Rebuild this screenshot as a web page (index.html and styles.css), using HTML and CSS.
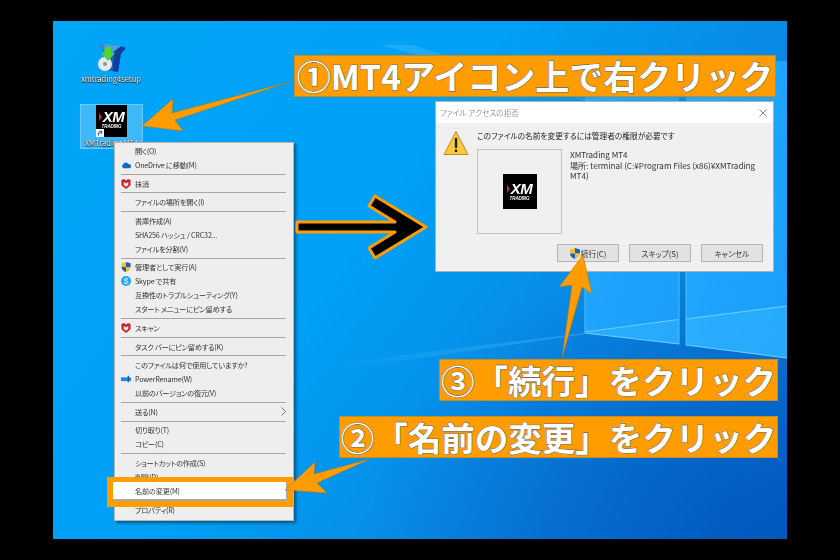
FILE: index.html
```html
<!DOCTYPE html>
<html lang="ja">
<head>
<meta charset="utf-8">
<title>ファイル名の変更</title>
<link rel="stylesheet" href="styles.css">
</head>
<body>
<main class="desktop">
  <svg class="wallpaper" viewBox="0 0 734 518" aria-hidden="true">
    <defs>
      <linearGradient id="pane" x1="0" y1="0" x2="1" y2="1">
        <stop offset="0" stop-color="#22aaff"/>
        <stop offset="1" stop-color="#1a9ef8"/>
      </linearGradient>
      <linearGradient id="ray" x1="0" y1="0" x2="1" y2="0">
        <stop offset="0" stop-color="#7fd4ff" stop-opacity="0"/>
        <stop offset="1" stop-color="#7fd4ff" stop-opacity=".3"/>
      </linearGradient>
    </defs>
    <polygon points="532,40 626,40 626,323 532,312" fill="url(#pane)"/>
    <polygon points="633,40 734,40 734,337 633,324" fill="url(#pane)"/>
    <polygon points="532,312 626,299 626,323" fill="#38b8ff" opacity=".45"/>
    <polygon points="633,298 734,285 734,337 633,324" fill="#38b8ff" opacity=".45"/>
    <path d="M532 311 L626 298.500 M633 298 L734 285 M532 312 L626 323 M633 324 L734 337" stroke="#6fd0ff" stroke-width="1" fill="none"/>
    <path d="M532 265 V312 M626 240 V323 M633 240 V324" stroke="#4cc4ff" stroke-width="1" fill="none"/>
    <polygon points="277,343 532,312 532,313 277,350" fill="url(#ray)"/>
    <polygon points="327,24 540,80 540,82 360,24" fill="#5cc6ff" opacity=".3"/>
  </svg>

  <figure class="shortcut setup">
    <svg class="setup-icon" viewBox="0 0 28 30" aria-hidden="true">
      <polygon points="8,10 23,10 20,29 7,27" fill="#1c62c0"/>
      <polygon points="16,10 23,10 20,29 15,28" fill="#0f3f96"/>
      <polygon points="0,2 5,1 12,10 8,12" fill="#2f86d6"/>
      <polygon points="28,5 23,3 15,9 18,10 23,11" fill="#123f8f"/>
      <polygon points="5,1 23,3 15,9 11,9" fill="#4e9ee6"/>
      <circle cx="7" cy="21" r="7" fill="#e6eaec"/>
      <circle cx="7" cy="21" r="2" fill="#8d979d"/>
      <polygon points="6.500,4 13,4 13,10 17,10 10,18 3,10 6.500,10" fill="#54d42a"/>
    </svg>
    <figcaption class="shortcut-label setup-label">xmtrading4setup</figcaption>
  </figure>

  <figure class="shortcut selected">
    <div class="xm-logo xm-desktop">
      <span class="xm-mark"><i class="xm-chevron"></i>XM</span>
      <span class="xm-sub">TRADING</span>
      <svg class="xm-link" viewBox="0 0 10 10" aria-hidden="true">
        <rect width="10" height="10" fill="#fff"/>
        <path d="M3 8 V5 H6 M4 3 H7 V6" stroke="#1d6fc4" stroke-width="1.500" fill="none"/>
      </svg>
    </div>
    <figcaption class="shortcut-label">XMTrading MT4</figcaption>
  </figure>

  <nav class="menu">
    <div class="row">開く(O)</div>
    <div class="row">
      <svg class="row-icon" viewBox="0 0 12 8" aria-hidden="true"><path d="M3 8 A2.500 2.500 0 0 1 2.500 3.500 A3.500 3.500 0 0 1 9 3 A2.500 2.500 0 0 1 10 8 Z" fill="#0f6cc4"/></svg>
      OneDrive に移動(M)
    </div>
    <hr class="sep">
    <div class="row">
      <svg class="row-icon" viewBox="0 0 10 11" aria-hidden="true"><path d="M0 1 L3 0 L5 2 L7 0 L10 1 V7 L5 11 L0 7 Z M2.500 3 V6.500 L5 8.500 L7.500 6.500 V3 L5 5 Z" fill="#c8202c" fill-rule="evenodd"/></svg>
      抹消
    </div>
    <hr class="sep">
    <div class="row">ファイルの場所を開く(I)</div>
    <hr class="sep">
    <div class="row">書庫作成(A)</div>
    <div class="row">SHA256 ハッシュ / CRC32...</div>
    <div class="row">ファイルを分割(V)</div>
    <hr class="sep">
    <div class="row">
      <svg class="row-icon" viewBox="0 0 10 11" aria-hidden="true"><path d="M5 0 L10 1.500 V5.500 H5 Z" fill="#1f5fb5"/><path d="M5 0 L0 1.500 V5.500 H5 Z" fill="#f6c21c"/><path d="M0 5.500 H5 V11 C2 10 0 8 0 5.500 Z" fill="#1f5fb5"/><path d="M10 5.500 H5 V11 C8 10 10 8 10 5.500 Z" fill="#f6c21c"/></svg>
      管理者として実行(A)
    </div>
    <div class="row">
      <svg class="row-icon" viewBox="0 0 10 10" aria-hidden="true"><circle cx="5" cy="5" r="5" fill="#22a6ec"/><path d="M7 3.300 C6 2.300 3.300 2.500 3.300 3.800 C3.300 5.300 6.900 4.700 6.900 6.300 C6.900 7.700 4 7.800 3 6.700" stroke="#fff" stroke-width="1" fill="none"/></svg>
      Skype で共有
    </div>
    <div class="row">互換性のトラブルシューティング(Y)</div>
    <div class="row">スタート メニューにピン留めする</div>
    <hr class="sep">
    <div class="row">
      <svg class="row-icon" viewBox="0 0 10 11" aria-hidden="true"><path d="M0 1 L3 0 L5 2 L7 0 L10 1 V7 L5 11 L0 7 Z M2.500 3 V6.500 L5 8.500 L7.500 6.500 V3 L5 5 Z" fill="#c8202c" fill-rule="evenodd"/></svg>
      スキャン
    </div>
    <hr class="sep">
    <div class="row">タスク バーにピン留めする(K)</div>
    <hr class="sep">
    <div class="row">このファイルは何で使用していますか?</div>
    <div class="row">
      <svg class="row-icon" viewBox="0 0 12 8" aria-hidden="true"><rect x="0" y="2" width="12" height="4.500" fill="#2a86d8"/><rect x="8" y="0" width="1.500" height="8" fill="#0f5ca8"/></svg>
      PowerRename(W)
    </div>
    <div class="row">以前のバージョンの復元(V)</div>
    <hr class="sep">
    <div class="row row-sub">送る(N)
      <svg class="chevron" viewBox="0 0 5 9" aria-hidden="true"><path d="M.5 .5 L4.500 4.500 L.5 8.500" stroke="#777" fill="none"/></svg>
    </div>
    <hr class="sep">
    <div class="row">切り取り(T)</div>
    <div class="row">コピー(C)</div>
    <hr class="sep">
    <div class="row">ショートカットの作成(S)</div>
    <div class="row">削除(D)</div>
    <div class="row row-active">名前の変更(M)</div>
    <hr class="sep">
    <div class="row">プロパティ(R)</div>
  </nav>

  <section class="dialog">
    <header class="dialog-title">
      <span>ファイル アクセスの拒否</span>
      <svg class="dialog-close" viewBox="0 0 9 9" aria-hidden="true"><path d="M.5 .5 L8.500 8.500 M8.500 .5 L.5 8.500" stroke="#777"/></svg>
    </header>
    <div class="dialog-body">
      <svg class="warn" viewBox="0 0 26 26" aria-hidden="true">
        <path d="M13 1.500 L25 24.500 H1 Z" fill="#fbc93d" stroke="#c98a1a" stroke-linejoin="round"/>
        <rect x="11.800" y="8" width="2.400" height="10" fill="#222"/>
        <rect x="11.800" y="19.500" width="2.400" height="2.500" fill="#222"/>
      </svg>
      <div class="dialog-main">
        <p class="dialog-msg">このファイルの名前を変更するには管理者の権限が必要です</p>
        <div class="dialog-file">
          <div class="thumb">
            <div class="xm-logo xm-thumb">
              <span class="xm-mark"><i class="xm-chevron"></i>XM</span>
              <span class="xm-sub">TRADING</span>
            </div>
          </div>
          <div class="file-info">XMTrading MT4<br>場所: terminal (C:¥Program Files (x86)¥XMTrading MT4)</div>
        </div>
      </div>
    </div>
    <footer class="dialog-actions">
      <button class="btn" type="button">
        <svg class="btn-shield" viewBox="0 0 10 11" aria-hidden="true"><path d="M5 0 L10 1.500 V5.500 H5 Z" fill="#1f5fb5"/><path d="M5 0 L0 1.500 V5.500 H5 Z" fill="#f6c21c"/><path d="M0 5.500 H5 V11 C2 10 0 8 0 5.500 Z" fill="#1f5fb5"/><path d="M10 5.500 H5 V11 C8 10 10 8 10 5.500 Z" fill="#f6c21c"/></svg>
        続行(C)
      </button>
      <button class="btn" type="button">スキップ(S)</button>
      <button class="btn" type="button">キャンセル</button>
    </footer>
  </section>

  <svg class="arrows" viewBox="0 0 734 518" aria-hidden="true">
    <g fill="#ff9d00" stroke="#a8741a" stroke-width=".5" transform="translate(-53 -21)">
      <polygon points="142,126 173,99 172,113 289,82 175,120 183,131"/>
      <polygon points="285,490 315,462 314,474 370,459 317,483 327,493"/>
      <polygon points="583,255 559,287 572,285 562,358 582,287 592,294"/>
    </g>
    <polygon transform="translate(-53 -21)" points="297,222 395,222 369,206 375,196 426,227 375,258 369,248 395,232 297,232" fill="#000" stroke="#ff9d00" stroke-width="3" stroke-linejoin="round"/>
  </svg>

  <div class="callout c1">①MT4アイコン上で右クリック</div>
  <div class="callout c3">③「続行」をクリック</div>
  <div class="callout c2">②「名前の変更」をクリック</div>
</main>
</body>
</html>
```

FILE: styles.css
```css
* { box-sizing: border-box; }

html, body {
  margin: 0;
  width: 840px;
  height: 560px;
  background: #000;
  overflow: hidden;
}

body {
  padding: 21px 53px;
  font-family: "Noto Sans CJK JP", "Noto Sans", sans-serif;
  font-feature-settings: "palt";
}

.desktop {
  position: relative;
  width: 734px;
  height: 518px;
  overflow: hidden;
  background:
    radial-gradient(ellipse 420px 300px at 100% 100%, #0058bd 0%, rgba(0, 88, 189, 0) 100%),
    linear-gradient(125deg, #00a6f8 0%, #00a0f6 42%, #0a86e2 72%, #0a6fd2 100%);
}

.wallpaper, .arrows {
  position: absolute;
  inset: 0;
  width: 734px;
  height: 518px;
}

.arrows { z-index: 5; filter: blur(.2px); }

/* desktop shortcuts */
.shortcut {
  position: absolute;
  margin: 0;
  display: flex;
  flex-direction: column;
  align-items: center;
  filter: blur(.3px);
}

.setup { left: 26px; top: 22px; width: 64px; }
.setup-icon { width: 28px; height: 30px; margin-left: 2px; }
.setup-label { margin-top: 3px; }

.selected {
  left: 27px;
  top: 83px;
  width: 63px;
  height: 45px;
  padding-top: 1px;
  background: rgba(255, 255, 255, .24);
  box-shadow: inset 0 0 0 1px rgba(255, 255, 255, .25);
}

.shortcut-label {
  margin-top: 1px;
  font-size: 7.500px;
  line-height: 10px;
  color: #fff;
  white-space: nowrap;
  text-shadow: 0 0 1px #000, 0 1px 1px #000;
}

/* XM logo */
.xm-logo {
  position: relative;
  background: #000;
  color: #fff;
  display: flex;
  flex-direction: column;
  align-items: center;
  justify-content: center;
  gap: 1px;
  font-family: "Liberation Sans", sans-serif;
  font-weight: 700;
  font-style: italic;
}

.xm-desktop { width: 31px; height: 32px; padding-bottom: 3px; }
.xm-thumb { width: 34px; height: 35px; }

.xm-mark {
  display: flex;
  align-items: center;
  gap: 1px;
  font-size: 15px;
  line-height: 12px;
  letter-spacing: -.6px;
}

.xm-chevron {
  width: 0;
  height: 0;
  border-left: 3px solid #e0202c;
  border-top: 4px solid transparent;
  border-bottom: 4px solid transparent;
}

.xm-sub {
  font-size: 4.500px;
  line-height: 5px;
  letter-spacing: -.1px;
}

.xm-link {
  position: absolute;
  left: 0;
  bottom: 0;
  width: 8px;
  height: 8px;
}

/* context menu */
.menu {
  position: absolute;
  z-index: 2;
  left: 61px;
  top: 121px;
  width: 180px;
  height: 379px;
  padding: 1px 7px 2px 6px;
  background: #eee;
  border: 1px solid #b5b5b5;
  box-shadow: 2px 2px 3px rgba(0, 0, 0, .45);
  filter: blur(.25px);
}

.row {
  position: relative;
  height: 14px;
  padding-left: 14px;
  font-size: 7.200px;
  letter-spacing: -.2px;
  line-height: 14px;
  color: #333;
  white-space: nowrap;
}

.row-icon {
  position: absolute;
  left: 0;
  top: 2px;
  width: 10px;
  height: 10px;
}

.chevron {
  position: absolute;
  right: 0;
  top: 2px;
  width: 5px;
  height: 9px;
}

.row-active { z-index: 1; }

.row-active::before {
  content: "";
  position: absolute;
  z-index: -1;
  left: -14px;
  right: -7px;
  top: -7px;
  bottom: -9px;
  background: #fff;
  border-style: solid;
  border-color: #ff9d00;
  border-width: 5px 5px 6px 6px;
  box-shadow: inset -1px -1px 0 1px #aaa;
}

.sep {
  height: 1px;
  margin: 1.800px 0;
  border: 0;
  background: #a6a6a6;
}

/* dialog */
.dialog {
  position: absolute;
  z-index: 3;
  left: 382px;
  top: 80px;
  width: 339px;
  height: 171px;
  display: flex;
  flex-direction: column;
  background: #f0f0f0;
  border: 1px solid #b0b0b0;
  font-size: 7.700px;
  color: #333;
  filter: blur(.25px);
}

.dialog-title {
  height: 21px;
  flex: none;
  display: flex;
  align-items: center;
  justify-content: space-between;
  padding: 0 6px 0 4px;
  background: #fff;
  color: #9a9a9a;
}

.dialog-close { width: 8px; height: 8px; }

.dialog-body {
  flex: 1;
  display: flex;
  gap: 8px;
  padding: 7px 15px 0 7px;
}

.warn { flex: none; width: 26px; height: 26px; }

.dialog-main { flex: 1; min-width: 0; }

.dialog-msg {
  margin: 0 0 7px;
  line-height: 12px;
  color: #222;
}

.dialog-file { display: flex; gap: 8px; }

.thumb {
  flex: none;
  width: 85px;
  height: 85px;
  border: 1px solid #c4c4c4;
  display: flex;
  align-items: center;
  justify-content: center;
}

.file-info {
  padding-top: 1px;
  line-height: 10.500px;
  font-size: 8.100px;
}

.dialog-actions {
  flex: none;
  display: flex;
  justify-content: flex-end;
  gap: 10px;
  padding: 0 10px 9px 0;
}

.btn {
  width: 62px;
  height: 18px;
  padding: 0;
  display: flex;
  align-items: center;
  justify-content: center;
  gap: 1px;
  background: #e2e2e2;
  border: 1px solid #b4b4b4;
  font: inherit;
  color: #333;
}

.btn-shield { width: 10px; height: 11px; }

/* orange labels */
.callout {
  position: absolute;
  z-index: 6;
  height: 42px;
  display: flex;
  align-items: center;
  justify-content: center;
  background: #ff9d00;
  border: 1px solid #c98a20;
  font-size: 33.500px;
  font-weight: 700;
  line-height: 1;
  color: #fff;
  white-space: nowrap;
  font-feature-settings: normal;
  -webkit-text-stroke: 1.100px #6a6a6a;
  paint-order: stroke fill;
}

.c1 { left: 241px; top: 34px; width: 482px; font-size: 34px; }
.c3 { left: 386px; top: 338px; width: 339px; }
.c2 { left: 286px; top: 395px; width: 439px; }
```
